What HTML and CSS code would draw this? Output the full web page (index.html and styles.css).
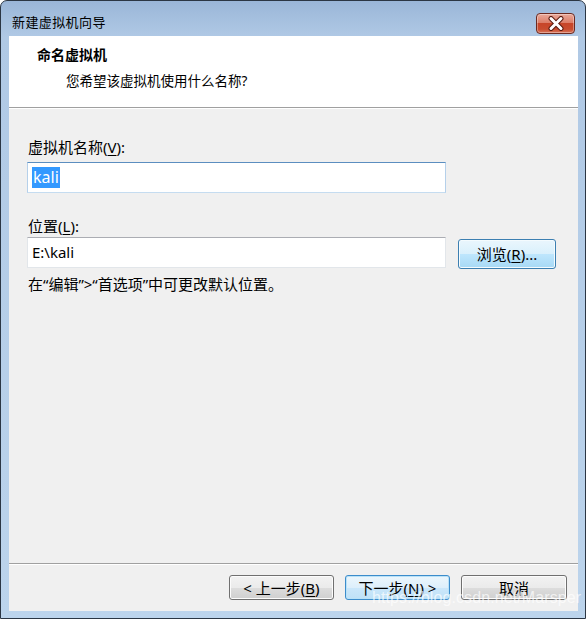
FILE: index.html
```html
<!DOCTYPE html>
<html lang="zh-CN">
<head>
<meta charset="utf-8">
<title>新建虚拟机向导</title>
<link rel="stylesheet" href="styles.css">
</head>
<body>
<div class="window">
  <div class="titlebar">
    <span class="title">新建虚拟机向导</span>
    <div class="close">
      <svg width="20" height="15" viewBox="0 0 20 15">
        <path d="M5 2.5 L15 12.5 M15 2.5 L5 12.5" stroke="#5a1a10" stroke-width="5" stroke-linecap="round" fill="none"/>
        <path d="M5 2.5 L15 12.5 M15 2.5 L5 12.5" stroke="#ffffff" stroke-width="3" stroke-linecap="round" fill="none"/>
      </svg>
    </div>
  </div>
  <div class="client">
    <div class="header">
      <div class="h-title">命名虚拟机</div>
      <div class="h-sub">您希望该虚拟机使用什么名称?</div>
    </div>
    <div class="content">
      <div class="lbl">虚拟机名称(<u>V</u>):</div>
      <div class="field focused"><span class="sel">kali</span></div>
      <div class="lbl lbl2">位置(<u>L</u>):</div>
      <div class="row">
        <div class="field">E:\kali</div>
        <div class="btn btn-hover browse">浏览(<u>R</u>)...</div>
      </div>
      <div class="note">在“编辑”&gt;“首选项”中可更改默认位置。</div>
    </div>
    <div class="footer">
      <div class="btn">&lt; 上一步(<u>B</u>)</div>
      <div class="btn btn-default">下一步(<u>N</u>) &gt;</div>
      <div class="btn">取消</div>
    </div>
  </div>
  <div class="watermark">https://blog.csdn.net/Marsper</div>
</div>
</body>
</html>
```
FILE: styles.css
```css
* { box-sizing: border-box; }
html, body { margin: 0; padding: 0; background: #ffffff; }
body {
  font-family: "Noto Sans", "Noto Sans CJK SC", sans-serif;
  font-size: 15px;
  color: #000;
}
.window {
  position: relative;
  width: 586px;
  height: 619px;
  border: 1px solid #2b3644;
  border-radius: 7px 7px 0 0;
  background: linear-gradient(to bottom, #9ab6d8 0px, #b0c9e5 36px, #bcd4ec 100%);
  display: flex;
  flex-direction: column;
  padding: 0 7px 7px 7px;
}
.titlebar {
  height: 35px;
  display: flex;
  align-items: center;
  justify-content: space-between;
  padding-left: 4px;
}
.title {
  font-family: "Noto Sans CJK SC", sans-serif;
  font-size: 13px;
  letter-spacing: 0.4px;
  color: #000;
  margin-top: 6px;
}
.close {
  width: 39px;
  height: 21px;
  margin-top: 9px;
  margin-right: 3px;
  border: 1px solid #6c2a21;
  border-radius: 4px;
  background: linear-gradient(to bottom, #e9a99a 0%, #dc7e69 45%, #c74529 50%, #c84c2f 80%, #d8765d 100%);
  box-shadow: inset 0 0 0 1px rgba(255,255,255,0.35);
  display: flex;
  align-items: center;
  justify-content: center;
}
.client {
  flex: 1;
  display: flex;
  flex-direction: column;
  background: #f0f0f0;
  margin-left: 1px;
}
.header {
  height: 72px;
  background: #ffffff;
  border-bottom: 1px solid #a0a0a0;
  padding: 8px 0 0 28px;
}
.h-title {
  font-family: "Noto Sans CJK SC", sans-serif;
  font-weight: bold;
  font-size: 14px;
  line-height: 20px;
}
.h-sub {
  font-family: "Noto Sans", "Noto Sans CJK SC", sans-serif;
  font-size: 13.5px;
  line-height: 20px;
  margin-top: 7px;
  padding-left: 29px;
}
.content {
  flex: 1;
  border-top: 1px solid #ffffff;
  padding: 28px 0 0 18px;
}
.lbl {
  line-height: 20px;
  height: 20px;
  padding-left: 1px;
  margin-bottom: 5px;
}
.lbl2 { margin-top: 23px; margin-bottom: 1px; }
u { text-decoration: underline; text-underline-offset: 2px; }
.field {
  flex: 0 0 419px;
  width: 419px;
  height: 31px;
  background: #ffffff;
  border: 1px solid #e2e6ea;
  border-top-color: #abadb3;
  padding: 3px 4px;
  line-height: 22px;
}
.field.focused {
  border-color: #c5dcf0;
  border-top-color: #5b8ec0;
  border-left-color: #b5d0ea;
  border-right-color: #b5d0ea;
}
.sel {
  background: #3399ff;
  color: #ffffff;
  display: inline-block;
  font-size: 16px;
  line-height: 21px;
  padding: 0 1px;
}
.row {
  display: flex;
  align-items: flex-start;
  gap: 12px;
}
.btn.browse { margin-top: 2px; flex: 0 0 98px; width: 98px; height: 30px; }
.note {
  margin-top: 5px;
  line-height: 20px;
  padding-left: 1px;
}
.footer {
  height: 48px;
  border-top: 1px solid #a0a0a0;
  box-shadow: inset 0 1px 0 #ffffff;
  display: flex;
  justify-content: flex-end;
  gap: 11px;
  padding: 11px 11px 0 0;
}
.btn {
  flex: 0 0 105px;
  width: 105px;
  height: 25px;
  border: 1px solid #707070;
  border-radius: 3px;
  background: linear-gradient(to bottom, #f2f2f2 0%, #ebebeb 50%, #dddddd 51%, #cfcfcf 100%);
  box-shadow: inset 0 0 0 1px #fcfcfc;
  display: flex;
  align-items: center;
  justify-content: center;
  line-height: 20px;
  white-space: nowrap;
}
.footer .btn:last-child { flex-basis: 106px; width: 106px; }
.btn-hover {
  border-color: #3c7fb1;
  background: linear-gradient(to bottom, #eaf6fd 0%, #d9f0fc 50%, #bee6fd 51%, #a7d9f5 100%);
  box-shadow: inset 0 0 0 1px #f4fbfe;
}
.btn-default {
  border-color: #3c8ccb;
  background: linear-gradient(to bottom, #ecf6fc 0%, #ddeffb 50%, #cbe7fa 51%, #bfe1f7 100%);
  box-shadow: inset 0 0 0 1px #b9e2f8;
}
.watermark {
  position: absolute;
  left: 371px;
  top: 588px;
  font-family: "Liberation Sans", Arial, sans-serif;
  font-size: 16px;
  line-height: 18px;
  color: rgba(255,255,255,0.7);
  letter-spacing: 0.1px;
}
```
